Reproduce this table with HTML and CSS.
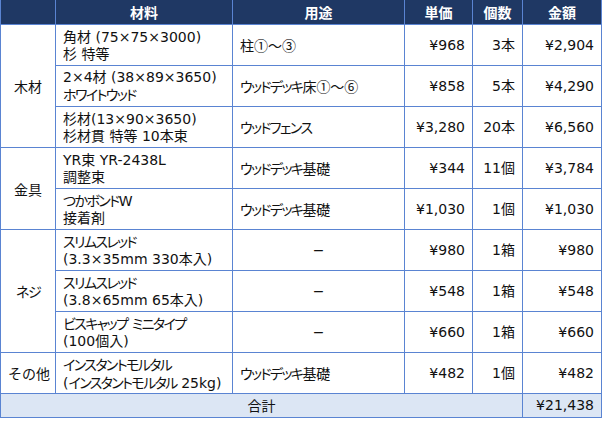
FILE: index.html
```html
<!DOCTYPE html>
<html lang="ja">
<head>
<meta charset="utf-8">
<link rel="stylesheet" href="styles.css">
</head>
<body>
<table class="tbl">
  <colgroup>
    <col class="c1"><col class="c2"><col class="c3"><col class="c4"><col class="c5"><col class="c6">
  </colgroup>
  <thead>
    <tr class="head">
      <th></th><th>材料</th><th>用途</th><th>単価</th><th>個数</th><th>金額</th>
    </tr>
  </thead>
  <tbody>
    <tr>
      <td class="cat" rowspan="3">木材</td>
      <td class="name">角材 (75×75×3000)<br>杉 特等</td>
      <td class="use">柱<span class="jp">①～③</span></td>
      <td class="num">¥968</td><td class="num">3本</td><td class="num">¥2,904</td>
    </tr>
    <tr>
      <td class="name">2×4材 (38×89×3650)<br><span class="k">ホワイトウッド</span></td>
      <td class="use"><span class="k">ウッドデッキ</span>床<span class="jp">①～⑥</span></td>
      <td class="num">¥858</td><td class="num">5本</td><td class="num">¥4,290</td>
    </tr>
    <tr>
      <td class="name">杉材(13×90×3650)<br>杉材貫 特等 10本束</td>
      <td class="use"><span class="k">ウッドフェンス</span></td>
      <td class="num">¥3,280</td><td class="num">20本</td><td class="num">¥6,560</td>
    </tr>
    <tr>
      <td class="cat" rowspan="2">金具</td>
      <td class="name">YR束 YR-2438L<br>調整束</td>
      <td class="use"><span class="k">ウッドデッキ</span>基礎</td>
      <td class="num">¥344</td><td class="num">11個</td><td class="num">¥3,784</td>
    </tr>
    <tr>
      <td class="name"><span class="k">つかボンド</span>W<br>接着剤</td>
      <td class="use"><span class="k">ウッドデッキ</span>基礎</td>
      <td class="num">¥1,030</td><td class="num">1個</td><td class="num">¥1,030</td>
    </tr>
    <tr>
      <td class="cat" rowspan="3"><span class="k">ネジ</span></td>
      <td class="name"><span class="k">スリムスレッド</span><br>(3.3×35mm 330本入)</td>
      <td class="use dash">−</td>
      <td class="num">¥980</td><td class="num">1箱</td><td class="num">¥980</td>
    </tr>
    <tr>
      <td class="name"><span class="k">スリムスレッド</span><br>(3.8×65mm 65本入)</td>
      <td class="use dash">−</td>
      <td class="num">¥548</td><td class="num">1箱</td><td class="num">¥548</td>
    </tr>
    <tr>
      <td class="name"><span class="k">ビスキャップ</span> <span class="k">ミニタイプ</span><br>(100個入)</td>
      <td class="use dash">−</td>
      <td class="num">¥660</td><td class="num">1箱</td><td class="num">¥660</td>
    </tr>
    <tr>
      <td class="cat">その他</td>
      <td class="name"><span class="k">インスタントモルタル</span><br>(<span class="k">インスタントモルタル</span> 25kg)</td>
      <td class="use"><span class="k">ウッドデッキ</span>基礎</td>
      <td class="num">¥482</td><td class="num">1個</td><td class="num">¥482</td>
    </tr>
    <tr class="total">
      <td class="sum-label" colspan="5">合計</td>
      <td class="num">¥21,438</td>
    </tr>
  </tbody>
</table>
</body>
</html>
```

FILE: styles.css
```css
html, body {
  margin: 0;
  padding: 0;
  background: #ffffff;
}

.tbl {
  border-collapse: collapse;
  table-layout: fixed;
  width: 601px;
  font-family: "DejaVu Sans", "Noto Sans CJK JP", sans-serif;
  font-size: 14px;
  line-height: 17px;
  color: #111111;
}

.c1 { width: 55px; }
.c2 { width: 177px; }
.c3 { width: 172px; }
.c4 { width: 68px; }
.c5 { width: 50px; }
.c6 { width: 79px; }

.tbl th,
.tbl td {
  border: 1px solid #5a84d2;
  padding: 0 7px;
  white-space: nowrap;
  overflow: hidden;
}

.head th {
  background: #1f3864;
  color: #ffffff;
  font-weight: bold;
  font-family: "Noto Sans CJK JP", sans-serif;
  font-size: 14px;
  height: 24px;
  text-align: center;
  border-top: none;
}

.tbl td {
  height: 39px;
  padding-top: 1px;
}

.jp {
  font-family: "Noto Sans CJK JP", sans-serif;
}

.k {
  font-family: "Noto Sans CJK JP", sans-serif;
  font-feature-settings: "palt";
  letter-spacing: -1.6px;
}

.cat {
  text-align: center;
  font-family: "Noto Sans CJK JP", sans-serif;
  padding-left: 2px;
  padding-right: 2px;
}

.name {
  text-align: left;
}

.use {
  text-align: left;
  padding-left: 6px;
}

.dash {
  text-align: center;
}

.num {
  text-align: right;
}

.total td {
  background: #dce6f4;
  height: 23px;
  padding-top: 0;
}

.sum-label {
  text-align: center;
  font-family: "Noto Sans CJK JP", sans-serif;
}
```
